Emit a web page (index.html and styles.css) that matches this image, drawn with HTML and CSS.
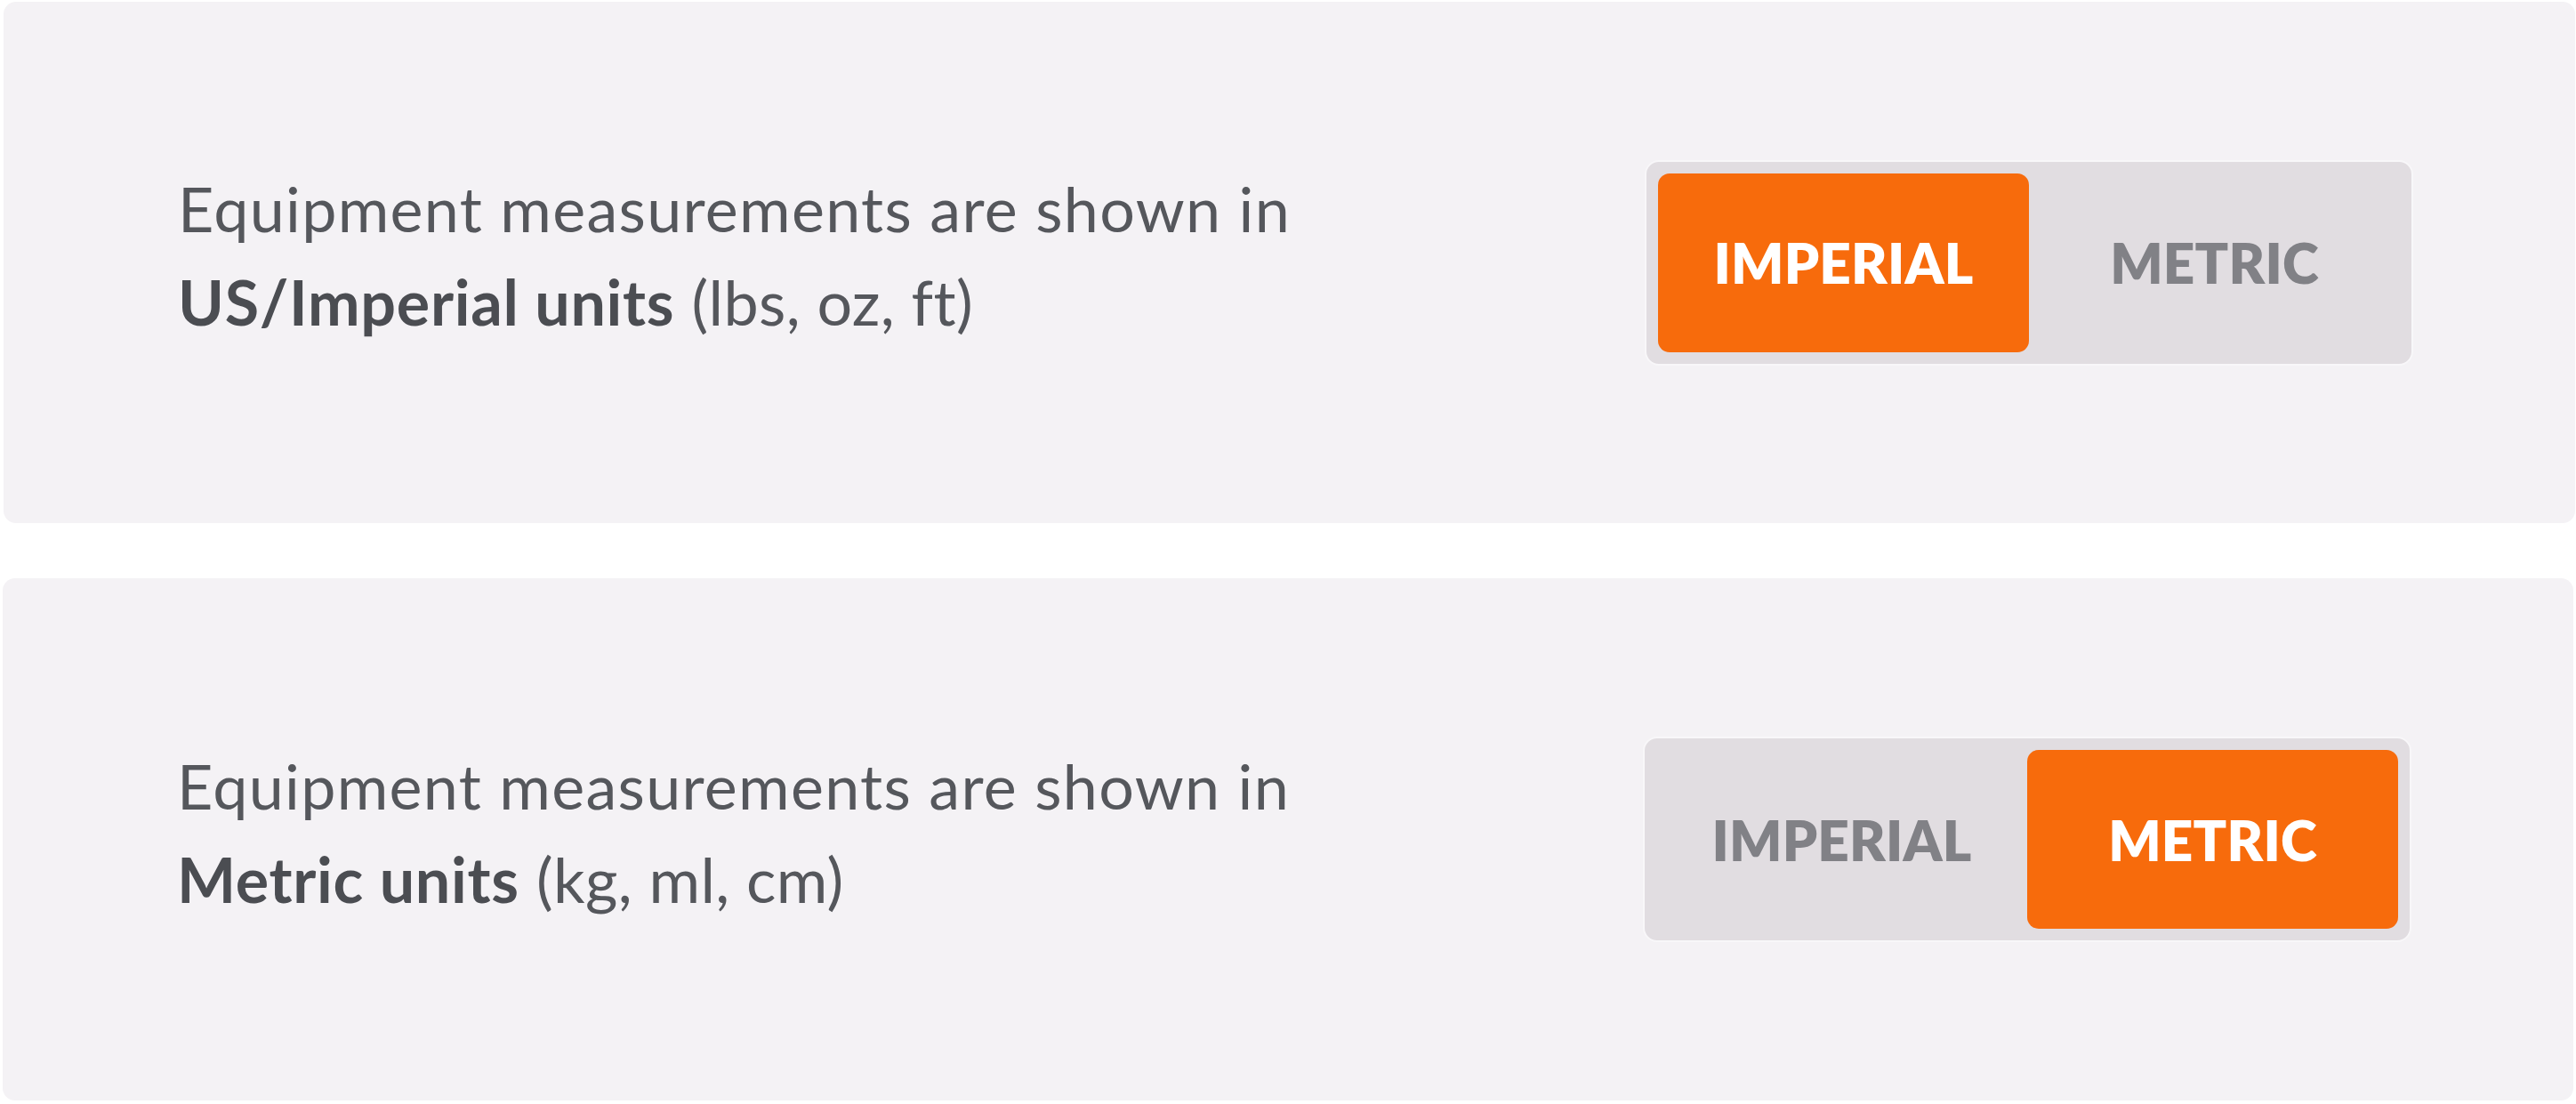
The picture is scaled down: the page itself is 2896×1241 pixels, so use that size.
FILE: index.html
```html
<!DOCTYPE html>
<html lang="en">
<head>
<meta charset="utf-8">
<title>Units</title>
<link rel="stylesheet" href="styles.css">
</head>
<body>
<main class="stack">
  <section class="card">
    <p class="desc">Equipment measurements are shown in<br><strong>US/Imperial units</strong> <span class="paren">(lbs, oz, ft)</span></p>
    <div class="toggle">
      <button class="opt active">IMPERIAL</button>
      <button class="opt">METRIC</button>
    </div>
  </section>
  <section class="card card-second">
    <p class="desc">Equipment measurements are shown in<br><strong>Metric units</strong> <span class="paren">(kg, ml, cm)</span></p>
    <div class="toggle">
      <button class="opt">IMPERIAL</button>
      <button class="opt active">METRIC</button>
    </div>
  </section>
</main>
</body>
</html>
```
FILE: styles.css
```css
html, body {
  margin: 0;
  padding: 0;
  background: #ffffff;
}
body {
  width: 2896px;
  height: 1241px;
  overflow: hidden;
  font-family: Lato, "Open Sans", "Liberation Sans", sans-serif;
}
.stack {
  display: flex;
  flex-direction: column;
  gap: 62px;
  padding: 2px 1px 0 4px;
}
.card {
  box-sizing: border-box;
  height: 586px;
  background: #f4f2f5;
  border-radius: 14px;
  display: flex;
  align-items: center;
  justify-content: space-between;
  padding: 0 182px 0 196px;
}
.card-second {
  height: 587px;
  margin-left: -1px;
  margin-right: 2px;
}
.desc {
  margin: 0 0 16px 0;
  font-size: 70px;
  line-height: 105px;
  letter-spacing: 1.3px;
  color: #55575c;
  font-weight: 400;
}
.desc strong {
  font-weight: 700;
  letter-spacing: 0.7px;
  color: #4b4d52;
}
.desc .paren {
  letter-spacing: 0.4px;
}
.toggle {
  box-sizing: border-box;
  width: 864px;
  height: 231px;
  padding: 13px;
  border: 2px solid #f8f7f9;
  border-radius: 16px;
  background: #e1dde1;
  display: grid;
  grid-template-columns: 1fr 1fr;
}
.opt {
  border: 0;
  margin: 0;
  padding: 0;
  background: transparent;
  border-radius: 13px;
  font-family: Lato, "Open Sans", "Liberation Sans", sans-serif;
  font-weight: 800;
  font-size: 62px;
  letter-spacing: 0.2px;
  color: #818186;
  display: flex;
  align-items: center;
  justify-content: center;
}
.opt.active {
  background: #f76b0c;
  color: #ffffff;
}
```
